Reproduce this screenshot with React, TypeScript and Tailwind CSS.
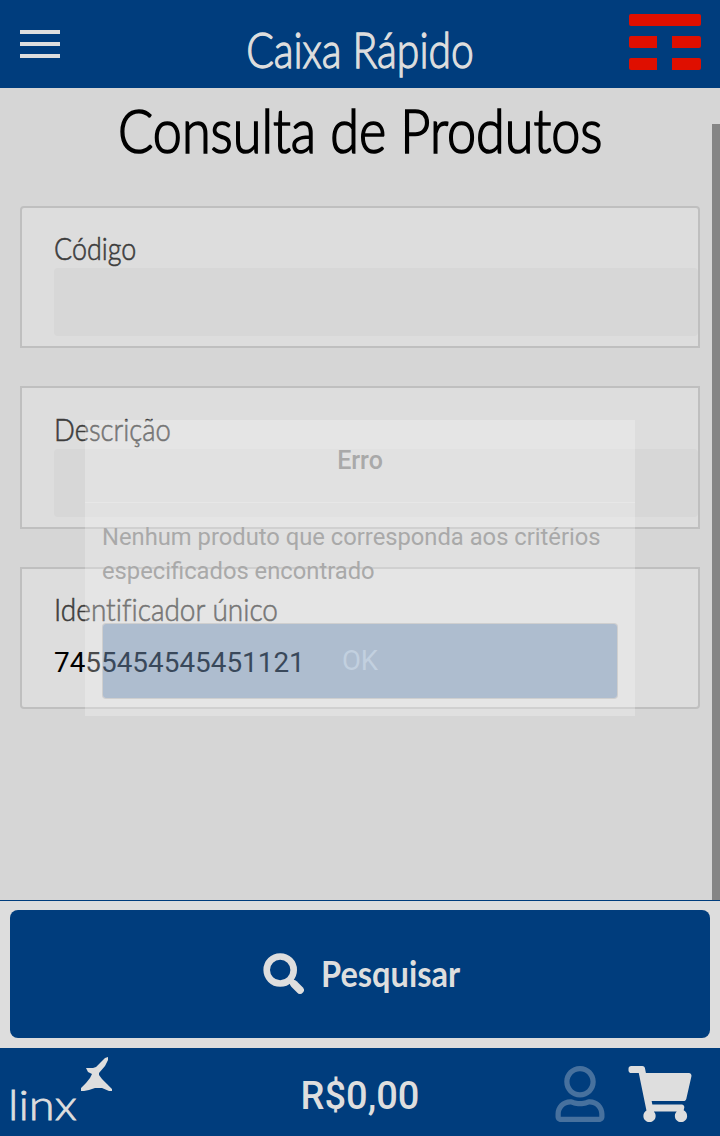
import { FaRegUser, FaShoppingCart } from "react-icons/fa";

function Logo() {
  return (
    <svg className="block h-14 w-[72px]" viewBox="0 0 72 56" fill="#df0f00">
      <rect width="72" height="12" rx="2" />
      <path d="M2 22H28V34H2Q0 34 0 32V24Q0 22 2 22ZM43 22H70Q72 22 72 24V32Q72 34 70 34H43ZM2 44H28V56H2Q0 56 0 54V46Q0 44 2 44ZM43 44H70Q72 44 72 46V54Q72 56 70 56H43Z" />
    </svg>
  );
}

function SearchIcon() {
  return (
    <svg className="size-[41px] shrink-0" viewBox="0 0 41 41" fill="none" stroke="currentColor">
      <circle cx="17.2" cy="17" r="13.5" strokeWidth="6.6" />
      <path d="M27 27L37 37" strokeWidth="6" />
      <path d="M31 31L37 37" strokeWidth="7.6" strokeLinecap="round" />
    </svg>
  );
}

function Header() {
  return (
    <header className="flex h-[88px] items-start justify-between bg-[#003d7d] pl-5 pr-[19px]">
      <button className="mt-[30px] flex w-[71px] flex-col gap-2" aria-label="Menu">
        <span className="h-1 w-10 bg-[#dedede]" />
        <span className="h-1 w-10 bg-[#dedede]" />
        <span className="h-1 w-10 bg-[#dedede]" />
      </button>
      <div className="mt-[19px] flex h-[60px] w-[230px] items-center justify-center">
        <span className="inline-block scale-x-[0.825] whitespace-nowrap font-['Lato',sans-serif] text-[49.5px] font-light text-[#dedede] [-webkit-text-stroke:1.3px_#dedede]">
          Caixa Rápido
        </span>
      </div>
      <div className="mt-[14px]">
        <Logo />
      </div>
    </header>
  );
}

type FieldProps = {
  label: string;
  value?: string;
  box: string;
  labelBox: string;
  stretch: string;
};

function Field({ label, value, box, labelBox, stretch }: FieldProps) {
  return (
    <div className={`flex flex-col border-2 border-[#bfbfbf] bg-[#dddddd] pl-8 ${box}`}>
      <label
        className={`whitespace-nowrap font-['Lato',sans-serif] text-[32px] font-light leading-[37px] text-[#3c3c3c] [font-variant-ligatures:none] ${labelBox}`}
      >
        <span className={`inline-block origin-left [-webkit-text-stroke:0.6px_#3c3c3c] ${stretch}`}>{label}</span>
      </label>
      {value ? (
        <div className="flex h-[68px] items-center font-['Roboto',sans-serif] text-[27.9px] text-black">{value}</div>
      ) : (
        <div className="h-[68px] rounded bg-[#d7d7d7]" />
      )}
    </div>
  );
}

function ErrorDialog() {
  return (
    <div
      role="dialog"
      className="absolute left-[85px] top-[420px] h-[296px] w-[550px] bg-[#f7f7f7]/30 font-['Roboto',sans-serif] text-[#a9a9a9]"
    >
      <div className="flex h-[83px] items-center justify-center border-b border-white/20 text-[25px] font-medium">
        Erro
      </div>
      <p className="ml-[17px] mt-[17px] whitespace-nowrap text-[23.75px] leading-[34px]">
        Nenhum produto que corresponda aos critérios
        <br />
        especificados encontrado
      </p>
      <button className="ml-[17px] mt-[35px] flex h-[76px] w-[516px] items-center justify-center rounded border border-[#b0b0b0]/40 bg-[#003d88]/24 bg-clip-padding text-[27.5px] text-[#c2d0df]">
        OK
      </button>
    </div>
  );
}

function LinxLogo() {
  return (
    <div className="flex h-[66px] w-[110px] items-end">
      <span className="w-[73px] origin-left scale-x-[1.12] whitespace-nowrap font-['Lato',sans-serif] text-[42px] font-light leading-[40px] text-[#dedede] [-webkit-text-stroke:0.8px_#dedede]">
        linx
      </span>
      <svg className="mb-[31px] h-9 w-8 shrink-0" viewBox="0 0 32 36" fill="#dedede">
        <path d="M24 1L27 0V3L24 9L18 16L18 18L21 22L26 27L31 32V34H28L21 31H14L8 33L3 34L0 34V31L5 26L9 21L11 17L7 15L5 11H12L15 10L20 5Z" />
      </svg>
    </div>
  );
}

export default function App() {
  return (
    <div className="relative flex h-[1136px] w-[720px] flex-col overflow-hidden bg-[#d6d6d6]">
      <Header />
      <main className="flex h-[812px]">
        <div className="flex w-[712px] flex-col pl-5 pr-3">
          <h1 className="mt-[7px] flex h-[70px] items-center justify-center">
            <span className="inline-block scale-x-[0.855] whitespace-nowrap font-['Lato',sans-serif] text-[61px] font-light text-black [-webkit-text-stroke:1.7px_black]">
              Consulta de Produtos
            </span>
          </h1>
          <div className="mt-[41px] flex flex-col gap-[38px]">
            <Field
              label="Código"
              box="h-[142px] rounded-t"
              labelBox="mt-[21px] h-[39px]"
              stretch="scale-x-[0.84]"
            />
            <Field
              label="Descrição"
              box="h-[143px]"
              labelBox="mt-[22px] h-[39px]"
              stretch="scale-x-[0.857]"
            />
            <Field
              label="Identificador único"
              value="7455454545451121"
              box="h-[142px] rounded-b"
              labelBox="mt-[21px] h-[39px]"
              stretch="scale-x-[0.875]"
            />
          </div>
        </div>
        <div className="mt-9 w-2 bg-[#858585]" />
      </main>
      <section className="h-[148px] border-t border-[#003d7d] bg-[#dddddd] px-[10px] pt-[9px]">
        <button className="flex h-32 w-full items-center rounded-lg bg-[#003d7d] pb-[2px] pl-[253px] text-[#dedede]">
          <SearchIcon />
          <span className="ml-[17px] inline-block origin-left scale-x-[0.88] whitespace-nowrap font-['Lato',sans-serif] text-[37px] font-bold">
            Pesquisar
          </span>
        </button>
      </section>
      <footer className="flex h-[88px] items-start justify-between bg-[#003d7d] pl-2 pr-7 text-[#dedede]">
        <div className="mt-[10px] w-[140px]">
          <LinxLogo />
        </div>
        <span className="ml-[20px] mt-[20px] flex h-14 w-[140px] items-center justify-center whitespace-nowrap font-['Roboto',sans-serif] text-[38px] font-medium">
          R$0,00
        </span>
        <div className="mt-[18px] flex gap-5">
          <FaRegUser className="size-14 text-[#47719e]" />
          <FaShoppingCart className="h-14 w-16" />
        </div>
      </footer>
      <ErrorDialog />
    </div>
  );
}
